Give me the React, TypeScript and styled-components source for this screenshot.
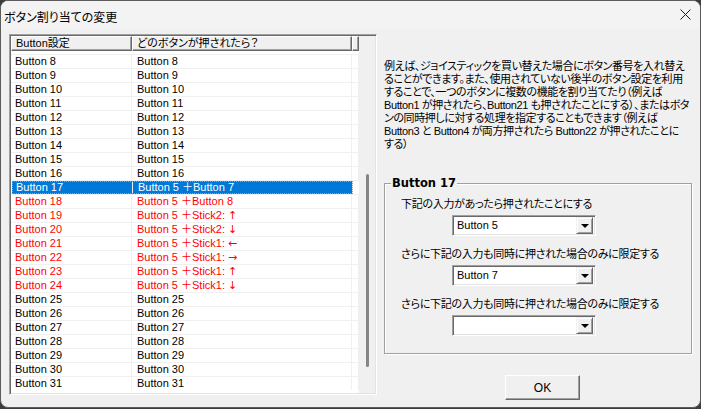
import React from "react"
import styled, { createGlobalStyle, css } from "styled-components"

const GlobalStyle = createGlobalStyle`
  html, body {
    margin: 0;
    padding: 0;
    background: #3c3c3c;
  }
  * {
    box-sizing: border-box;
  }
`

const uiFont = `"Liberation Sans", "Noto Sans CJK JP", sans-serif`

type RowData = { name: string; input: string; arrow?: string; red?: boolean; selected?: boolean }

const plain = (n: number): RowData => ({ name: `Button ${n}`, input: `Button ${n}` })

const rows: RowData[] = [
  ...[8, 9, 10, 11, 12, 13, 14, 15, 16].map(plain),
  { name: "Button 17", input: "Button 5 ＋Button 7", selected: true },
  { name: "Button 18", input: "Button 5 ＋Button 8", red: true },
  { name: "Button 19", input: "Button 5 ＋Stick2: ", arrow: "↑", red: true },
  { name: "Button 20", input: "Button 5 ＋Stick2: ", arrow: "↓", red: true },
  { name: "Button 21", input: "Button 5 ＋Stick1: ", arrow: "←", red: true },
  { name: "Button 22", input: "Button 5 ＋Stick1: ", arrow: "→", red: true },
  { name: "Button 23", input: "Button 5 ＋Stick1: ", arrow: "↑", red: true },
  { name: "Button 24", input: "Button 5 ＋Stick1: ", arrow: "↓", red: true },
  ...[25, 26, 27, 28, 29, 30, 31].map(plain),
]

const descLines = [
  "例えば、ジョイスティックを買い替えた場合にボタン番号を入れ替え",
  "ることができます。また、使用されていない後半のボタン設定を利用",
  "することで、一つのボタンに複数の機能を割り当てたり（例えば",
  "Button1 が押されたら、Button21 も押されたことにする）、またはボタ",
  "ンの同時押しに対する処理を指定することもできます（例えば",
  "Button3 と Button4 が両方押されたら Button22 が押されたことに",
  "する）",
]

const App: React.FC = () => {
  return (
    <>
      <GlobalStyle />
      <Window>
        <TitleBar>
          <Title>ボタン割り当ての変更</Title>
          <CloseButton>
            <svg width="11" height="11" viewBox="0 0 11 11">
              <path d="M0.5 0.5 L10.5 10.5 M10.5 0.5 L0.5 10.5" stroke="#1a1a1a" strokeWidth="1" fill="none" />
            </svg>
          </CloseButton>
        </TitleBar>
        <Body>
          <ListFrame>
            <Table>
              <HeaderRow>
                <HeaderCell width={121}>Button設定</HeaderCell>
                <HeaderCell width={220}>どのボタンが押されたら？</HeaderCell>
                <HeaderCell width={7} />
              </HeaderRow>
              <Rows>
                {rows.map(r => (
                  <Row key={r.name}>
                    <RowMain selected={r.selected} red={r.red}>
                      <Cell width={121} pad={4}>{r.name}</Cell>
                      <Cell width={220} pad={5}>
                        {r.input}
                        {r.arrow && <ArrowGlyph>{r.arrow}</ArrowGlyph>}
                      </Cell>
                    </RowMain>
                    <Cell width={7} pad={0} />
                  </Row>
                ))}
              </Rows>
            </Table>
            <ScrollTrack>
              <ScrollThumb />
            </ScrollTrack>
          </ListFrame>
          <RightColumn>
            <Description>
              {descLines.map(l => (
                <DescLine key={l}>{l}</DescLine>
              ))}
            </Description>
            <GroupBox>
              <GroupTitle>Button 17</GroupTitle>
              <Label first>下記の入力があったら押されたことにする</Label>
              <Combo value="Button 5" />
              <Label>さらに下記の入力も同時に押された場合のみに限定する</Label>
              <Combo value="Button 7" />
              <Label>さらに下記の入力も同時に押された場合のみに限定する</Label>
              <Combo value="" />
            </GroupBox>
            <OkButton>OK</OkButton>
          </RightColumn>
        </Body>
      </Window>
    </>
  )
}

const Combo: React.FC<{ value: string }> = ({ value }) => (
  <ComboBox>
    <ComboText>{value}</ComboText>
    <DropButton>
      <Arrow />
    </DropButton>
  </ComboBox>
)

const Window = styled.div`
  width: 701px;
  height: 408px;
  background: #f0f0f0;
  border: 1px solid #5c5c5c;
  border-radius: 8px;
  overflow: hidden;
  display: flex;
  flex-direction: column;
  font-family: ${uiFont};
  color: #000;
`
const TitleBar = styled.div`
  height: 28px;
  flex: none;
  display: flex;
  align-items: center;
  justify-content: space-between;
  padding: 0 9px 0 3px;
  background: #f3f3f3;
`
const Title = styled.div`
  font-family: "Noto Sans CJK JP", sans-serif;
  font-feature-settings: "palt";
  font-size: 12px;
  margin-top: 2px;
`
const CloseButton = styled.div`
  width: 11px;
  height: 11px;
  display: flex;
  margin-top: -2px;
`
const Body = styled.div`
  flex: 1;
  display: flex;
  padding: 5px 0 0 8px;
`
const ListFrame = styled.div`
  width: 368px;
  height: 361px;
  flex: none;
  display: flex;
  border: 1px solid;
  border-color: #a0a0a0 #ffffff #ffffff #a0a0a0;
  box-shadow: inset 1px 1px 0 #696969, inset -1px -1px 0 #e3e3e3;
  padding: 1px;
`
const Table = styled.div`
  width: 348px;
  display: flex;
  flex-direction: column;
  background: #fff;
  overflow: hidden;
`
const HeaderRow = styled.div`
  display: flex;
  height: 15px;
  flex: none;
  background: #f0f0f0;
`
const HeaderCell = styled.div<{ width: number }>`
  width: ${p => p.width}px;
  flex: none;
  height: 15px;
  border-top: 1px solid #fff;
  border-left: 1px solid #fff;
  border-right: 1px solid #696969;
  border-bottom: 1px solid #696969;
  box-shadow: inset -1px -1px 0 #a0a0a0;
  font-family: "Liberation Sans", "Noto Sans CJK JP", sans-serif;
  font-feature-settings: "palt";
  font-size: 11px;
  line-height: 13px;
  padding-left: 4px;
  white-space: nowrap;
  overflow: hidden;
`
const Rows = styled.div`
  flex: 1;
  overflow: hidden;
  padding-top: 3px;
`
const Row = styled.div`
  display: flex;
  height: 14px;
  border-top: 1px solid #f0f0f0;
`
const RowMain = styled.div<{ selected?: boolean; red?: boolean }>`
  display: flex;
  color: ${p => (p.red ? "#ff0000" : "#000")};
  ${p =>
    p.selected &&
    css`
      background: #0078d7;
      color: #fff;
      outline: 1px dotted #ff8728;
      outline-offset: -1px;
      margin-left: 1px;
    `}
`
const Cell = styled.div<{ width: number; pad: number }>`
  width: ${p => p.width}px;
  flex: none;
  height: 13px;
  border-right: 1px solid #f0f0f0;
  padding-left: ${p => p.pad}px;
  font-family: "Liberation Sans", "Noto Sans CJK JP", sans-serif;
  font-size: 11px;
  line-height: 13px;
  white-space: nowrap;
  overflow: hidden;
`
const ArrowGlyph = styled.span`
  font-family: "DejaVu Sans", sans-serif;
  font-size: 11px;
  line-height: 13px;
`
const ScrollTrack = styled.div`
  width: 16px;
  flex: none;
  background: #f0f0f0;
  display: flex;
  flex-direction: column;
  padding: 138px 0 0 7px;
`
const ScrollThumb = styled.div`
  width: 3px;
  height: 193px;
  background: #858585;
  border-radius: 2px;
`
const RightColumn = styled.div`
  flex: 1;
  min-width: 0;
  display: flex;
  flex-direction: column;
  padding: 0 8px 0 7px;
`
const Description = styled.div`
  margin-top: 26px;
  font-family: "Liberation Sans", "Noto Sans CJK JP", sans-serif;
  font-feature-settings: "palt";
  font-size: 11px;
  letter-spacing: -0.4px;
  line-height: 13px;
`
const DescLine = styled.div`
  white-space: nowrap;
  height: 13px;
`
const GroupBox = styled.div`
  position: relative;
  margin-top: 32px;
  width: 308px;
  height: 171px;
  border: 1px solid #a0a0a0;
  box-shadow: inset 1px 1px 0 #fff, 1px 1px 0 #fff;
  display: flex;
  flex-direction: column;
  padding: 13px 0 17px 16px;
`
const GroupTitle = styled.div`
  position: absolute;
  left: 6px;
  top: -8px;
  padding: 0 1px;
  background: #f0f0f0;
  font-family: "DejaVu Sans", sans-serif;
  font-weight: bold;
  font-size: 11.5px;
  line-height: 14px;
`
const Label = styled.div<{ first?: boolean }>`
  margin-top: ${p => (p.first ? 0 : 11)}px;
  height: 13px;
  font-family: "Noto Sans CJK JP", sans-serif;
  font-feature-settings: "palt";
  font-size: 11px;
  letter-spacing: -0.3px;
  line-height: 13px;
  white-space: nowrap;
`
const ComboBox = styled.div`
  margin: 5px 0 0 51px;
  width: 144px;
  height: 21px;
  display: flex;
  align-items: center;
  background: #fff;
  border: 1px solid;
  border-color: #a0a0a0 #ffffff #ffffff #a0a0a0;
  box-shadow: inset 1px 1px 0 #696969, inset -1px -1px 0 #e3e3e3;
  padding: 2px;
`
const ComboText = styled.div`
  flex: 1;
  padding-left: 2px;
  font-family: "Liberation Sans", sans-serif;
  font-size: 11px;
  line-height: 13px;
`
const DropButton = styled.div`
  width: 17px;
  height: 17px;
  display: flex;
  align-items: center;
  justify-content: center;
  background: #f0f0f0;
  border: 1px solid;
  border-color: #f0f0f0 #696969 #696969 #f0f0f0;
  box-shadow: inset 1px 1px 0 #fff, inset -1px -1px 0 #a0a0a0;
`
const Arrow = styled.div`
  width: 0;
  height: 0;
  border-left: 4px solid transparent;
  border-right: 4px solid transparent;
  border-top: 4px solid #000;
  margin-top: 1px;
`
const OkButton = styled.div`
  margin: 21px 0 0 121px;
  width: 75px;
  height: 25px;
  display: flex;
  align-items: center;
  justify-content: center;
  background: #f0f0f0;
  border: 1px solid;
  border-color: #fff #696969 #696969 #fff;
  box-shadow: inset -1px -1px 0 #a0a0a0;
  font-family: "Liberation Sans", sans-serif;
  font-size: 12px;
`

export default App
